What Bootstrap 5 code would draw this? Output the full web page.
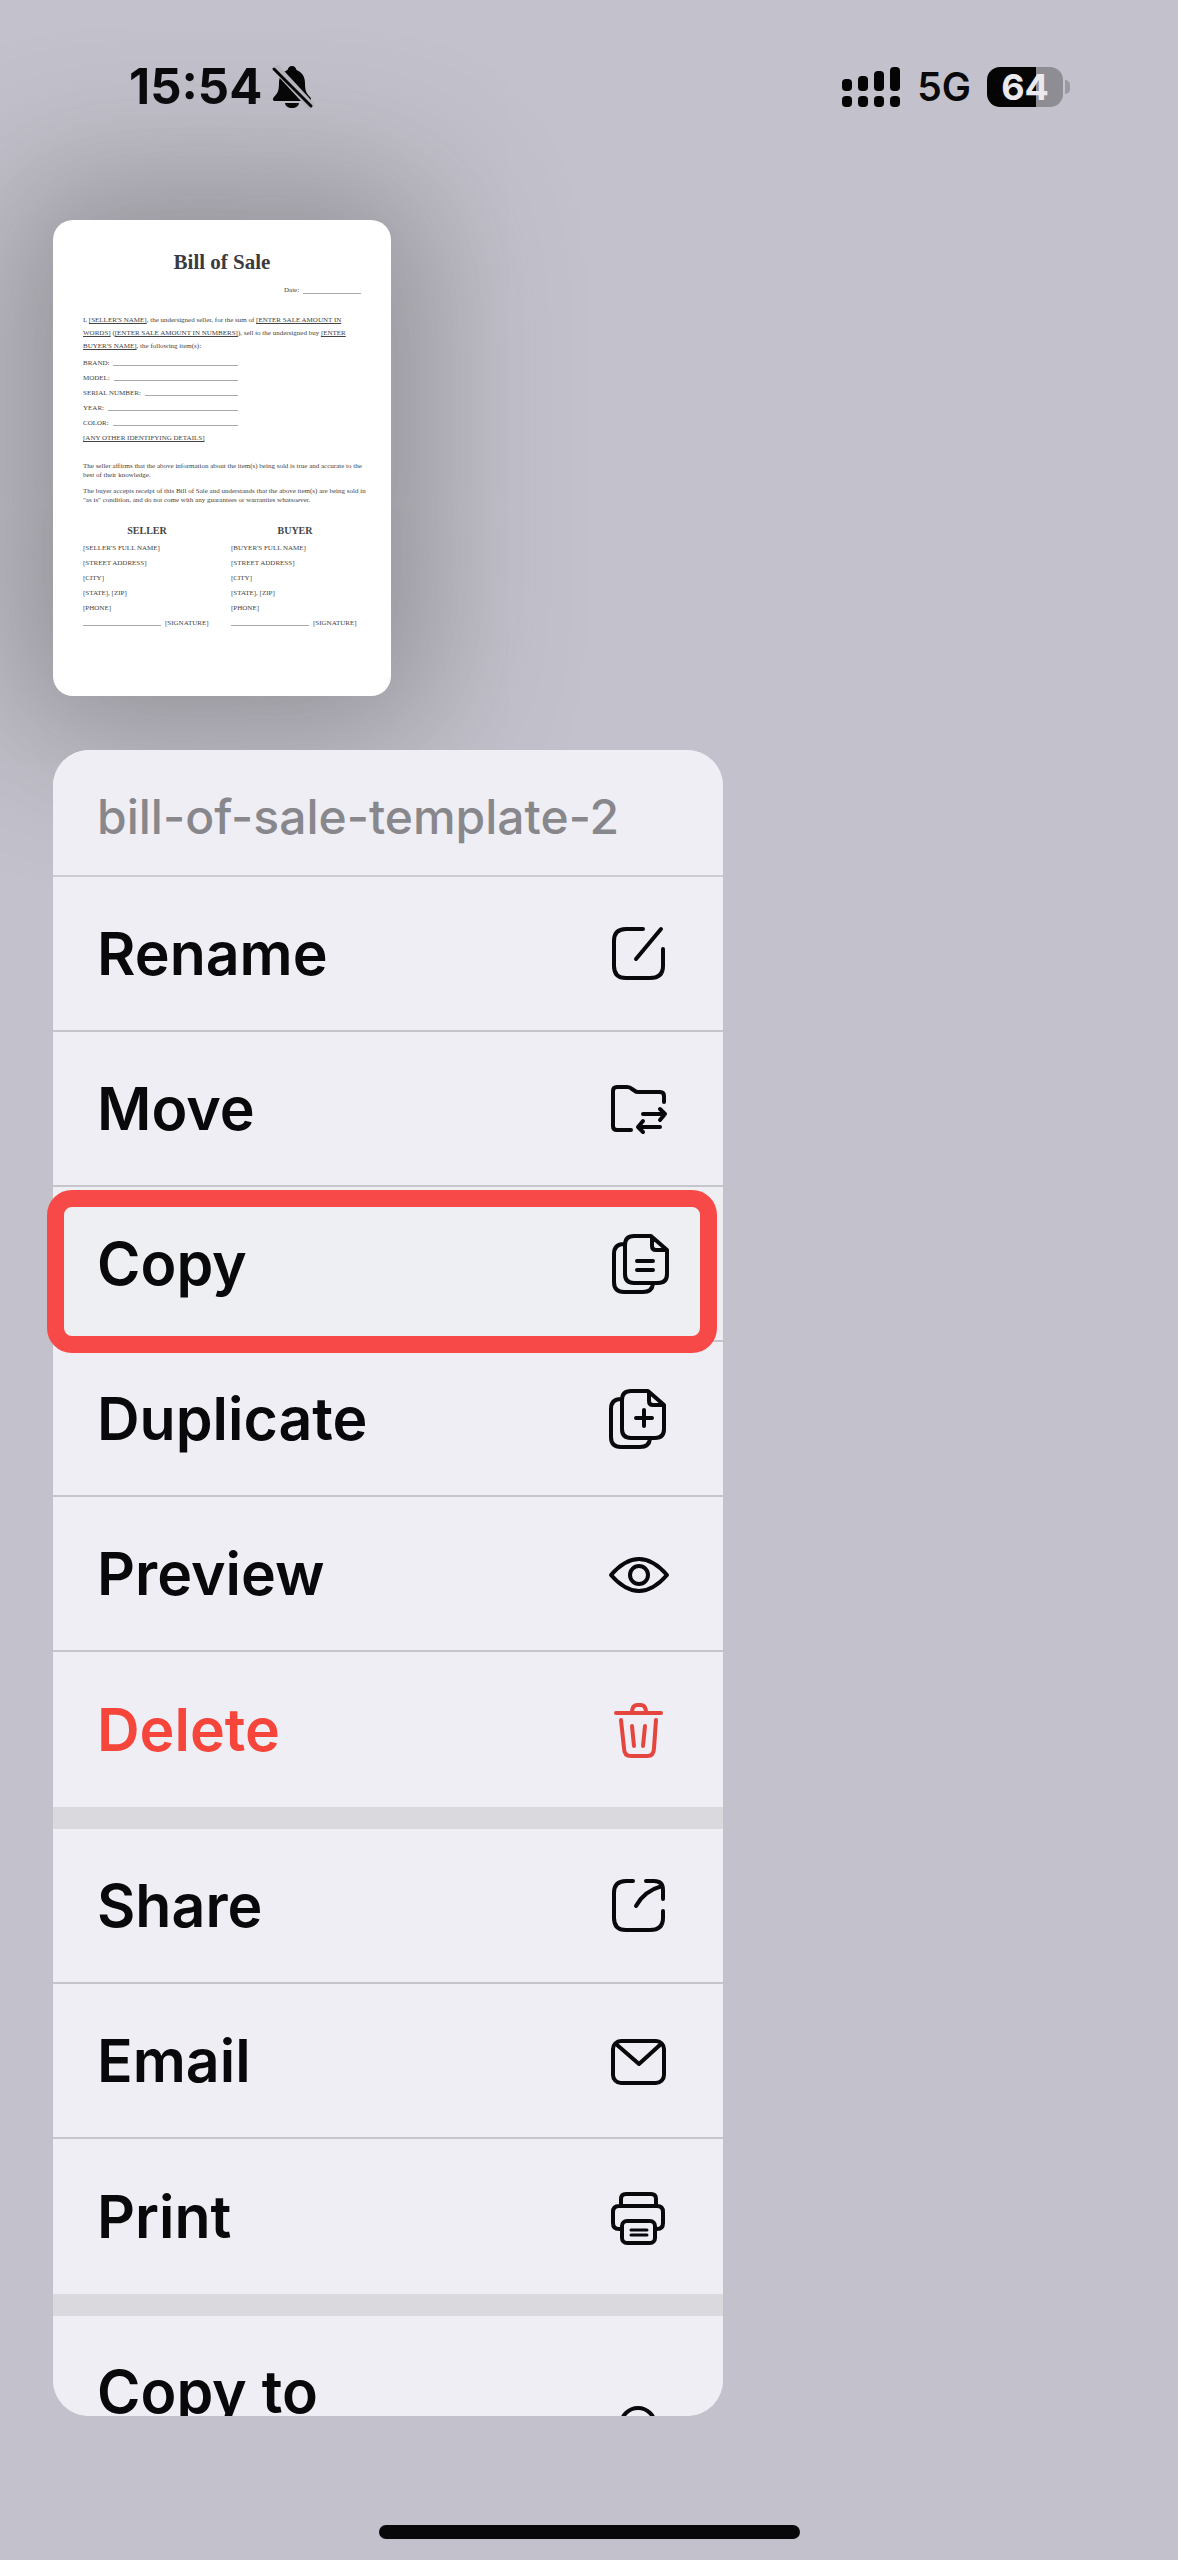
<!DOCTYPE html>
<html lang="en">
<head>
<meta charset="utf-8">
<meta name="viewport" content="width=device-width, initial-scale=1">
<title>Bill of Sale</title>
<link href="https://cdn.jsdelivr.net/npm/bootstrap@5.3.0/dist/css/bootstrap.min.css" rel="stylesheet">
<style>
  body { background: #c3c1cb; font-family: Inter, "Liberation Sans", sans-serif; color: #09090b; }
  .screen { height: 100vh; overflow: hidden; }
  .status { padding: 51px 108px 0 129px; height: 220px; font-weight: 600; }
  .status > div { height: 72px; }
  .clock { font-size: 49px; font-weight: 700; }
  .network { font-size: 39px; font-weight: 600; }
  .battery { width: 76px; height: 40px; border-radius: 13px; font-size: 36px; font-weight: 700; color: #e9e9ee;
    background: linear-gradient(90deg, #050506 64%, #8e8d93 64%); }
  .battery-tip { width: 5px; height: 14px; border-radius: 0 5px 5px 0; background: #9b9aa0; margin-left: 2px; }

  .content { padding: 0 53px; min-height: 0; }
  .sheet { width: 338px; height: 476px; padding: 29px 30px; border-radius: 20px; background: #fff; color: #444;
    font: 7px/9px "Liberation Serif", serif; box-shadow: 0 0 140px 40px rgba(80, 80, 80, .42); }
  .sheet h1 { font: bold 21px/26px "Liberation Serif", serif; color: #3b3b3f; }
  .sheet h2 { font: bold 10px/14px "Liberation Serif", serif; margin: 0 0 3px; }
  .sheet p { margin: 0 0 7px; white-space: nowrap; }
  .sheet .intro { line-height: 13px; margin: 19px 0 3px; }
  .sheet .blank { border-bottom: 1px solid #aaa; height: 8px; }
  .sheet .date-line { width: 77px; margin-top: 11px; }
  .sheet .field-list { width: 155px; }
  .sheet .entry { height: 15px; white-space: nowrap; line-height: 15px; }
  .sheet .entry .blank { margin-top: 2px; }
  .sheet .party { width: 148px; flex-shrink: 0; }
  .sheet .party h2 { width: 128px; }
  .sheet .parties { padding-top: 12px; }
  .sheet .sign-line { width: 78px; }

  .menu-zone { margin-top: 54px; width: 670px; min-height: 0; }
  .menu { --bs-list-group-bg: #efeef4; --bs-list-group-color: #09090b; --bs-list-group-border-color: #c6c5cb;
    background: #efeef4; border-radius: 36px; overflow: hidden; }
  .menu-title { height: 127px; padding: 8px 44px 0; font-size: 48px; font-weight: 500; color: #88878c; background: #efeef4;
    border-bottom: 2px solid #cccbd1; flex-shrink: 0; }
  .menu .list-group-item { height: 155px; padding: 0 53px 0 44px; border-width: 0 0 2px; flex-shrink: 0;
    font-size: 59px; line-height: 72px; font-weight: 600; }
  .menu .list-group-item.section-end { border-bottom: 0; }
  .menu .list-group-item.picked { background: #eeeff2; }
  .menu .list-group-item.danger-item { color: #f6463c; }
  .menu .list-group-item.two-line { height: 240px; padding-top: 40px; }
  .menu svg { width: 64px; height: 64px; fill: none; stroke: currentColor; stroke-width: 4; stroke-linecap: round; stroke-linejoin: round; }
  .menu .danger-item svg { stroke: #e5453f; }
  .section-gap { height: 22px; background: #dad9de; flex-shrink: 0; }
  .marker { top: 440px; left: -6px; right: 6px; height: 163px; border: 17px solid #f74a48; border-radius: 25px; pointer-events: none; }
  .home-zone { height: 144px; padding-top: 109px; }
  .home-bar { width: 421px; height: 14px; border-radius: 7px; background: #08080a; }
</style>
</head>
<body>
<div class="screen d-flex flex-column">
  <header class="status d-flex justify-content-between flex-shrink-0">
    <div class="d-flex align-items-center gap-2">
      <span class="clock">15:54</span>
      <svg width="44" height="44" viewBox="0 0 44 44" role="img" aria-label="Silent">
        <path d="M22 1c-2.500 0-4 2-4.500 4C12 7 9 12 9 18c0 7-1 10-5 14-2 2-1 4 1 4h34c2 0 3-2 1-4-4-4-5-7-5-14 0-6-3-11-8.500-13-.5-2-2-4-4.500-4z" fill="#050506"/>
        <path d="M15 38h14c-.5 3.500-3 5-7 5s-6.500-1.500-7-5z" fill="#050506"/>
        <path d="M5 2l37 40" stroke="#bab9c1" stroke-width="8"/>
        <path d="M4 4l37 37" stroke="#050506" stroke-width="3" stroke-linecap="round"/>
      </svg>
    </div>
    <div class="d-flex align-items-center">
      <svg width="60" height="42" viewBox="0 0 60 42" fill="#050506" role="img" aria-label="Signal">
        <rect x="1" y="13" width="10" height="12" rx="4"/><rect x="17" y="10" width="10" height="15" rx="4"/><rect x="33" y="5" width="10" height="20" rx="4"/><rect x="49" y="1" width="10" height="24" rx="4"/>
        <rect x="1" y="30" width="10" height="11" rx="4"/><rect x="17" y="30" width="10" height="11" rx="4"/><rect x="33" y="30" width="10" height="11" rx="4"/><rect x="49" y="30" width="10" height="11" rx="4"/>
      </svg>
      <span class="network mx-3">5G</span>
      <span class="battery d-flex align-items-center justify-content-center">64</span>
      <span class="battery-tip"></span>
    </div>
  </header>

  <main class="content d-flex flex-column flex-grow-1">
    <article class="sheet flex-shrink-0">
      <h1 class="text-center m-0">Bill of Sale</h1>
      <div class="date-line d-flex gap-1 ms-auto"><span>Date:</span><span class="blank flex-grow-1"></span></div>
      <p class="intro">I, <u>[SELLER'S NAME]</u>, the undersigned seller, for the sum of <u>[ENTER SALE AMOUNT IN</u><br>
        <u>WORDS]</u> (<u>[ENTER SALE AMOUNT IN NUMBERS]</u>), sell to the undersigned buy <u>[ENTER</u><br>
        <u>BUYER'S NAME]</u>, the following item(s):</p>
      <div class="field-list">
        <div class="entry d-flex gap-1"><span>BRAND:</span><span class="blank flex-grow-1"></span></div>
        <div class="entry d-flex gap-1"><span>MODEL:</span><span class="blank flex-grow-1"></span></div>
        <div class="entry d-flex gap-1"><span>SERIAL NUMBER:</span><span class="blank flex-grow-1"></span></div>
        <div class="entry d-flex gap-1"><span>YEAR:</span><span class="blank flex-grow-1"></span></div>
        <div class="entry d-flex gap-1"><span>COLOR:</span><span class="blank flex-grow-1"></span></div>
        <div class="entry"><u>[ANY OTHER IDENTIFYING DETAILS]</u></div>
      </div>
      <p class="mt-3">The seller affirms that the above information about the item(s) being sold is true and accurate to the<br>best of their knowledge.</p>
      <p>The buyer accepts receipt of this Bill of Sale and understands that the above item(s) are being sold in<br>"as is" condition, and do not come with any guarantees or warranties whatsoever.</p>
      <div class="parties d-flex">
        <section class="party">
          <h2 class="text-center">SELLER</h2>
          <div class="entry">[SELLER'S FULL NAME]</div><div class="entry">[STREET ADDRESS]</div><div class="entry">[CITY]</div><div class="entry">[STATE], [ZIP]</div><div class="entry">[PHONE]</div>
          <div class="entry d-flex gap-1"><span class="blank sign-line"></span><span>[SIGNATURE]</span></div>
        </section>
        <section class="party">
          <h2 class="text-center">BUYER</h2>
          <div class="entry">[BUYER'S FULL NAME]</div><div class="entry">[STREET ADDRESS]</div><div class="entry">[CITY]</div><div class="entry">[STATE], [ZIP]</div><div class="entry">[PHONE]</div>
          <div class="entry d-flex gap-1"><span class="blank sign-line"></span><span>[SIGNATURE]</span></div>
        </section>
      </div>
    </article>

    <div class="menu-zone position-relative d-flex flex-column flex-grow-1">
      <div class="menu list-group flex-grow-1">
        <div class="menu-title d-flex align-items-center">bill-of-sale-template-2</div>
        <button type="button" class="list-group-item list-group-item-action d-flex align-items-center justify-content-between">Rename
          <svg viewBox="0 0 64 64"><path d="M37 7H20Q8 7 8 19V44Q8 56 20 56H44Q57 56 57 44V27M55 7L30 37"/></svg></button>
        <button type="button" class="list-group-item list-group-item-action d-flex align-items-center justify-content-between">Move
          <svg viewBox="0 0 64 64"><path d="M25 53H11Q7 53 7 49V14Q7 10 11 10H21Q24 10 26 12L29 14Q30 15 32 15H54Q58 15 58 19V25M37 37H59M54 32L59 37L54 43M54 50H33M37 44L32 50L37 55"/></svg></button>
        <button type="button" class="list-group-item list-group-item-action picked d-flex align-items-center justify-content-between">Copy
          <svg viewBox="0 0 64 64"><path d="M45 4H28Q19 4 19 13V42Q19 51 28 51H52Q61 51 61 42V18ZM46 5V14Q46 18 50 18H60M18 12Q8 12 8 22V50Q8 60 18 60H37Q46 60 47 52M31 29H47M31 38H47"/></svg></button>
        <button type="button" class="list-group-item list-group-item-action d-flex align-items-center justify-content-between">Duplicate
          <svg viewBox="0 0 64 64"><path d="M42 4H25Q16 4 16 13V42Q16 51 25 51H49Q58 51 58 42V18ZM43 5V14Q43 18 47 18H57M15 12Q5 12 5 22V50Q5 60 15 60H34Q43 60 44 52M30 31H46M38 23V39"/></svg></button>
        <button type="button" class="list-group-item list-group-item-action d-flex align-items-center justify-content-between">Preview
          <svg viewBox="0 0 64 64"><path d="M5 33Q19 17 33 17T61 33Q47 49 33 49T5 33Z"/><circle cx="33" cy="33" r="9"/></svg></button>
        <button type="button" class="list-group-item list-group-item-action danger-item section-end d-flex align-items-center justify-content-between">Delete
          <svg viewBox="0 0 64 64"><path d="M10 15H55M26 15Q26 7 31 7H35Q40 7 40 15M15 22L18 50Q18 58 25 58H41Q48 58 48 50L50 22M26 28L28 48M39 28L37 48"/></svg></button>
        <div class="section-gap"></div>
        <button type="button" class="list-group-item list-group-item-action d-flex align-items-center justify-content-between">Share
          <svg viewBox="0 0 64 64"><path d="M27 7H20Q8 7 8 19V44Q8 56 20 56H44Q57 56 57 44V37M40 7H48Q57 7 57 16V25M30 32Q38 17 56 12"/></svg></button>
        <button type="button" class="list-group-item list-group-item-action d-flex align-items-center justify-content-between">Email
          <svg viewBox="0 0 64 64"><rect x="7" y="12" width="51" height="42" rx="8"/><path d="M10 15L33 35L55 15"/></svg></button>
        <button type="button" class="list-group-item list-group-item-action section-end d-flex align-items-center justify-content-between">Print
          <svg viewBox="0 0 64 64"><path d="M15 21V14Q15 9 20 9H45Q50 9 50 14V21M15 44H13Q7 44 7 38V27Q7 21 13 21H51Q57 21 57 27V38Q57 44 51 44H50"/><rect x="16" y="36" width="33" height="22" rx="5"/><path d="M25 45H41M25 50H41" stroke-width="3"/></svg></button>
        <div class="section-gap"></div>
        <button type="button" class="list-group-item list-group-item-action two-line d-flex align-items-start justify-content-between">Copy to
          <svg class="mt-5" viewBox="0 0 64 64"><circle cx="32" cy="21" r="17"/></svg></button>
      </div>
      <div class="marker position-absolute"></div>
    </div>
  </main>

  <footer class="home-zone flex-shrink-0 d-flex justify-content-center"><div class="home-bar"></div></footer>
</div>
<script src="https://cdn.jsdelivr.net/npm/bootstrap@5.3.0/dist/js/bootstrap.bundle.min.js"></script>
</body>
</html>
